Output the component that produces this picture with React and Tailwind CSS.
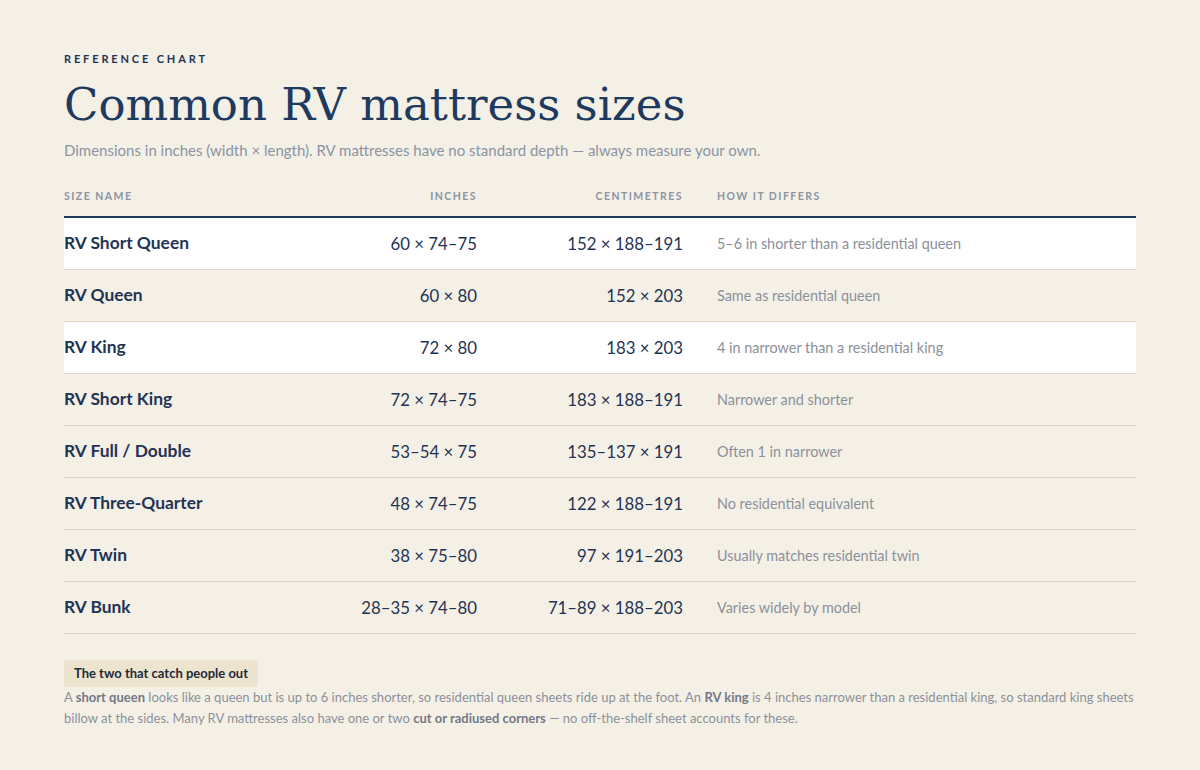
import React from 'react';

const rows = [
  { name: 'RV Short Queen', inches: '60 × 74–75', cm: '152 × 188–191', diff: '5–6 in shorter than a residential queen', hl: true },
  { name: 'RV Queen', inches: '60 × 80', cm: '152 × 203', diff: 'Same as residential queen' },
  { name: 'RV King', inches: '72 × 80', cm: '183 × 203', diff: '4 in narrower than a residential king', hl: true },
  { name: 'RV Short King', inches: '72 × 74–75', cm: '183 × 188–191', diff: 'Narrower and shorter' },
  { name: 'RV Full / Double', inches: '53–54 × 75', cm: '135–137 × 191', diff: 'Often 1 in narrower' },
  { name: 'RV Three-Quarter', inches: '48 × 74–75', cm: '122 × 188–191', diff: 'No residential equivalent' },
  { name: 'RV Twin', inches: '38 × 75–80', cm: '97 × 191–203', diff: 'Usually matches residential twin' },
  { name: 'RV Bunk', inches: '28–35 × 74–80', cm: '71–89 × 188–203', diff: 'Varies widely by model' },
];

export default function App() {
  return (
    <div className="min-h-[770px] bg-[#f5f0e6] px-16 pt-[51px] pb-10 font-['Lato','Liberation_Sans',sans-serif]">
      {/* Heading */}
      <p className="text-[11px] font-bold tracking-[0.26em] text-[#1f3354] leading-4">REFERENCE CHART</p>
      <h1 className="mt-3 font-['DejaVu_Serif','Liberation_Serif',serif] text-[45px] leading-[52px] text-[#1e3a5f]">
        Common RV mattress sizes
      </h1>
      <p className="mt-[9px] text-[15px] leading-5 text-[#8b94a3]">
        Dimensions in inches (width × length). RV mattresses have no standard depth — always measure your own.
      </p>

      {/* Table */}
      <div className="mt-7">
        <div className="grid grid-cols-[213px_200px_206px_1fr] border-b-2 border-[#1e3a5f] pb-3 text-[10.5px] font-bold tracking-[0.14em] text-[#8b94a3] leading-4">
          <div>SIZE NAME</div>
          <div className="text-right">INCHES</div>
          <div className="text-right">CENTIMETRES</div>
          <div className="pl-[34px]">HOW IT DIFFERS</div>
        </div>
        {rows.map((r) => (
          <div
            key={r.name}
            className={`grid h-[52px] grid-cols-[213px_200px_206px_1fr] items-center border-b border-[#ddd6c4] ${r.hl ? 'bg-white' : ''}`}
          >
            <div className="text-[17.4px] font-bold text-[#1f3354]">{r.name}</div>
            <div className="text-right text-[16.8px] text-[#1f3354]">{r.inches}</div>
            <div className="text-right text-[16.8px] text-[#1f3354]">{r.cm}</div>
            <div className="pl-[34px] text-[14.4px] text-[#8b909b]">{r.diff}</div>
          </div>
        ))}
      </div>

      {/* Note */}
      <div className="mt-[26px]">
        <div className="w-fit rounded-[3px] bg-[#ede4d0] px-[10px] py-[5px] text-[13px] font-bold leading-[17px] text-[#1f2937]">
          The two that catch people out
        </div>
        <p className="text-[13px] leading-[21px] text-[#8b909b]">
          A <b className="font-bold text-[#737986]">short queen</b> looks like a queen but is up to 6 inches shorter, so residential queen sheets ride up at the foot. An <b className="font-bold text-[#737986]">RV king</b> is 4 inches narrower than a residential king, so standard king sheets billow at the sides. Many RV mattresses also have one or two <b className="font-bold text-[#737986]">cut or radiused corners</b> — no off-the-shelf sheet accounts for these.
        </p>
      </div>
    </div>
  );
}
